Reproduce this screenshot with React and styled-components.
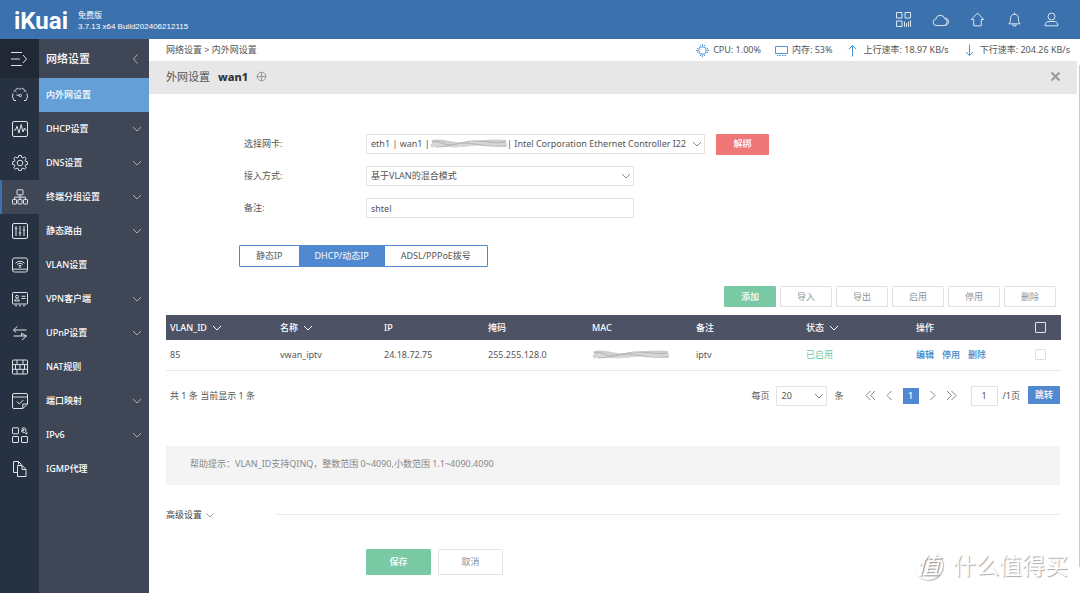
import { useState } from 'react'
import styled, { createGlobalStyle } from 'styled-components'


const menuItems = [
    { title: '内外网设置', active: true },
    { title: 'DHCP设置', expandable: true },
    { title: 'DNS设置', expandable: true },
    { title: '终端分组设置', expandable: true },
    { title: '静态路由', expandable: true },
    { title: 'VLAN设置' },
    { title: 'VPN客户端', expandable: true },
    { title: 'UPnP设置', expandable: true },
    { title: 'NAT规则' },
    { title: '端口映射', expandable: true },
    { title: 'IPv6', expandable: true },
    { title: 'IGMP代理' },
]

const columns = [
    { title: 'VLAN_ID', width: 110, sortable: true },
    { title: '名称', width: 104, sortable: true },
    { title: 'IP', width: 104 },
    { title: '掩码', width: 104 },
    { title: 'MAC', width: 104 },
    { title: '备注', width: 110 },
    { title: '状态', width: 110, sortable: true },
    { title: '操作', width: 108 },
]

const tabs = ['静态IP', 'DHCP/动态IP', 'ADSL/PPPoE拨号']
const bulkActions = ['导入', '导出', '启用', '停用', '删除']

// the hidden MAC address leaves a gap in the adapter name
const adapterName = `eth1 | wan1 |${'\u00a0'.repeat(33)}| Intel Corporation Ethernet Controller I22`

const railIcons = [
    { name: '概况', draw: <><path d="M4 13.500H2A7.300 7.300 0 0 1 1 6.500M1.800 4.700A7.400 7.400 0 0 1 6.500 1.200M9.500 1.200a7.400 7.400 0 0 1 4.700 3.500M15 6.500a7.400 7.400 0 0 1-1 7h-2" /><circle cx="8.300" cy="8.500" r="1.200" /><path d="M4.500 8l2.600.4M8 1v2M12.800 4l-1.100 1M3.300 4l1.100 1" /></> },
    { name: '监控', draw: <><rect x=".5" y=".5" width="15" height="15" rx="1.5" /><path d="M2 9h1.500L5 5.200l2 6.800 2.200-8.500L11 11l1.500-4 .9 2h1" /></> },
    { name: '系统', draw: <><circle cx="8" cy="8" r="2.8" /><path d="M6.7.5h2.6l.4 2 1.3.5 1.7-1.1 1.5 1.6-1.1 1.7.5 1.3 2 .4v2.4l-2 .4-.5 1.3 1.1 1.7-1.5 1.5-1.7-1.1-1.3.5-.4 2H6.700l-.4-2-1.300-.5-1.700 1.100-1.500-1.500L2.900 11l-.5-1.300-2-.4V6.900l2-.4.5-1.300-1.100-1.700 1.500-1.600L5 3l1.300-.5z" /></> },
    { name: '网络', active: true, draw: <><rect x="5" y=".8" width="6" height="5" rx=".5" /><path d="M8 5.800v4.700M2.500 10.500V8.200h11v2.300" /><rect x=".5" y="10.500" width="4" height="4.500" rx=".5" /><rect x="6" y="10.500" width="4" height="4.500" rx=".5" /><rect x="11.500" y="10.500" width="4" height="4.500" rx=".5" /></> },
    { name: '流控', draw: <><rect x=".5" y=".5" width="15" height="15" rx="1.5" /><path d="M4 3v10M8 3v10M12 3v10M2.800 5.500h2.400M6.800 10h2.400M10.800 7h2.400" /></> },
    { name: '无线', draw: <><rect x=".5" y="1" width="15" height="14" rx="2" /><path d="M.5 12.200h15M3.500 6.200a6.300 6.300 0 0 1 9 0M5 7.600a4.200 4.200 0 0 1 6 0M6.500 9a2 2 0 0 1 3 0" /><circle cx="8" cy="10" r=".5" /></> },
    { name: '认证', draw: <><rect x=".5" y="1.500" width="15" height="11.500" rx=".8" /><circle cx="5" cy="5.700" r="1.400" /><path d="M2.700 10c.2-3 4.500-3 4.700 0zM9.500 5.300h4M9.500 7.500h4M3 14.800h2M7 14.800h2M11 14.800h2" /></> },
    { name: '转发', draw: <path d="M14.500 5H1.500l4-3.800M1.500 5l2.700 2.500M1.500 11h13l-4.500 4M14.500 11L9.500 8.200v2.800" /> },
    { name: '防火墙', draw: <><rect x=".5" y="1" width="15" height="14" rx="1" /><path d="M.5 5.600h15M.5 10.300h15M5 1v4.600M11 1v4.600M3.500 5.600v4.700M8 5.600v4.700M12.500 5.600v4.700M5 10.300V15M11 10.300V15" /></> },
    { name: '行为', draw: <><path d="M10.800 15.500H2A1.500 1.500 0 0 1 .5 14V2A1.500 1.500 0 0 1 2 .5h12A1.500 1.500 0 0 1 15.500 2v9zM.5 4h15M15.500 11h-4.700v4.500" /><path d="M4.800 8.500l2.500 2.500L11.500 6.800" /></> },
    { name: '应用', draw: <><rect x=".5" y=".8" width="6" height="6" rx=".5" /><rect x=".5" y="9.500" width="6" height="6" rx=".5" /><rect x="9.500" y="9.500" width="6" height="6" rx=".5" /><path d="M9.800 1.500l2.200-.8 2 1.500-.5 2 1.800 1.600-1 1.200-2-1.600-2.200-.4-.5-1.800 1.800.6.8-1z" /></> },
    { name: '日志', draw: <><path d="M5 11.500H1.500V.5h5L9 3v1.500M6.500.5v3" /><path d="M5.500 4.500h4.800l3.700 4v7H5.500zM10 4.500v4h4" /></> },
]

export default function App() {
    const [tab, setTab] = useState(1)
    const [remark, setRemark] = useState('shtel')
    const [page, setPage] = useState('1')

    return (
        <>
            <GlobalStyle />
            <Page>
                <TopBar>
                    <Logo>iKuai</Logo>
                    <Version>
                        <span>免费版</span>
                        <span>3.7.13 x64 Build202406212115</span>
                    </Version>
                    <TopIcons>
                        <IconButton aria-label="二维码">
                            <Icon size={17} viewBox="0 0 17 17">
                                <rect x="1.500" y="1.500" width="5.500" height="5.500" />
                                <rect x="10" y="1.500" width="5.500" height="5.500" />
                                <rect x="1.500" y="10" width="5.500" height="5.500" />
                                <path d="M9.500 10.500v5.300M11.500 12v3.800M13.500 10.500v5.300M15.500 9.500v6.300" />
                            </Icon>
                        </IconButton>
                        <IconButton aria-label="云平台">
                            <Icon size={17} viewBox="0 0 17 17">
                                <path d="M4 14.500a3.300 3.300 0 0 1-.2-6.500 4.600 4.600 0 0 1 8.900-.5 3.600 3.600 0 0 1-.9 7z" />
                                <path d="M12.700 7.300c2-.5 3.800 1 3.800 3.200 0 2.300-1.500 4-3.700 4" />
                            </Icon>
                        </IconButton>
                        <IconButton aria-label="升级">
                            <Icon size={17} viewBox="0 0 17 17">
                                <path d="M8.500 2L2.300 8.500h2.400v6.300h7.600V8.500h2.400z" />
                            </Icon>
                        </IconButton>
                        <IconButton aria-label="消息">
                            <Icon size={17} viewBox="0 0 17 17">
                                <path d="M2.800 12.800c1.500-1.200 1.700-2.300 1.700-5C4.500 5 6 3.300 8.500 3.300S12.500 5 12.500 7.800c0 2.700.2 3.800 1.700 5zM8.500 3.300V1.500M7 13v1.800h3V13" />
                            </Icon>
                        </IconButton>
                        <IconButton aria-label="用户">
                            <Icon size={17} viewBox="0 0 17 17">
                                <circle cx="8.500" cy="5.500" r="3.500" />
                                <path d="M2 14.800c0-3 1.500-4.300 4-4.300h5c2.500 0 4 1.300 4 4.300z" />
                            </Icon>
                        </IconButton>
                    </TopIcons>
                </TopBar>
                <Body>
                    <Rail>
                        <RailToggle aria-label="展开菜单">
                            <Icon size={16} viewBox="0 0 16 16">
                                <path d="M0 1.500h11M0 8h9M0 14.500h11M12 4l3.500 4-3.500 4" />
                            </Icon>
                        </RailToggle>
                        {railIcons.map((item) => (
                            <RailItem key={item.name} aria-label={item.name} $active={item.active}>
                                <Icon size={16} viewBox="0 0 16 16">{item.draw}</Icon>
                            </RailItem>
                        ))}
                    </Rail>
                    <Menu>
                        <MenuTitle>
                            网络设置
                            <Icon size={10} viewBox="0 0 10 10"><path d="M6.500.5L2.500 5l4 4.500" /></Icon>
                        </MenuTitle>
                        {menuItems.map((item) => (
                            <MenuItem key={item.title} href="#" $active={item.active}>
                                {item.title}
                                {item.expandable && <Chevron />}
                            </MenuItem>
                        ))}
                    </Menu>
                    <Main>
                        <StatusBar>
                            <Crumbs>网络设置 &gt; 内外网设置</Crumbs>
                            <Stat>
                                <Icon size={13} viewBox="0 0 13 13">
                                    <rect x="3" y="3" width="7" height="7" rx="2" />
                                    <path d="M4.500 1v1M6.500 0v2M8.500 1v1M4.500 11v1M6.500 11v2M8.500 11v1M1 4.500h1M0 6.500h2M1 8.500h1M11 4.500h1M11 6.500h2M11 8.500h1" />
                                </Icon>
                                CPU: 1.00%
                            </Stat>
                            <Stat>
                                <Icon size={13} viewBox="0 0 13 13">
                                    <rect x=".5" y="2.500" width="12" height="7" />
                                    <path d="M2 11.500h9" strokeDasharray="1.500 1" />
                                </Icon>
                                内存: 53%
                            </Stat>
                            <Stat>
                                <Icon size={13} viewBox="0 0 13 13"><path d="M6.500 12.500v-11M3 5l3.500-3.500L10 5" /></Icon>
                                上行速率: 18.97 KB/s
                            </Stat>
                            <Stat>
                                <Icon size={13} viewBox="0 0 13 13"><path d="M6.500.5v11M3 8l3.500 3.500L10 8" /></Icon>
                                下行速率: 204.26 KB/s
                            </Stat>
                        </StatusBar>
                        <TitleBar>
                            <span>外网设置</span>
                            <WanName>wan1</WanName>
                            <IconButton aria-label="新增">
                                <Icon size={11} viewBox="0 0 11 11"><circle cx="5.500" cy="5.500" r="4.300" /><path d="M5.500 1v9M1 5.500h9" /></Icon>
                            </IconButton>
                            <CloseButton aria-label="关闭">
                                <Icon size={11} viewBox="0 0 11 11" weight={2}><path d="M1.500 1.500l8 8M9.500 1.500l-8 8" /></Icon>
                            </CloseButton>
                        </TitleBar>
                        <Content>
                            <Form>
                                <Row>
                                    <Label htmlFor="adapter">选择网卡:</Label>
                                    <SelectBox $width={339}>
                                        <Select id="adapter"><option>{adapterName}</option></Select>
                                        <AdapterMask><Scribble /></AdapterMask>
                                        <Chevron />
                                    </SelectBox>
                                    <UnbindButton>解绑</UnbindButton>
                                </Row>
                                <Row>
                                    <Label htmlFor="mode">接入方式:</Label>
                                    <SelectBox $width={268}>
                                        <Select id="mode"><option>基于VLAN的混合模式</option></Select>
                                        <Chevron />
                                    </SelectBox>
                                </Row>
                                <Row>
                                    <Label htmlFor="remark">备注:</Label>
                                    <Input id="remark" $width={268} value={remark} onChange={(e) => setRemark(e.target.value)} />
                                </Row>
                            </Form>
                            <Tabs>
                                {tabs.map((title, index) => (
                                    <Tab key={title} $active={index === tab} onClick={() => setTab(index)}>{title}</Tab>
                                ))}
                            </Tabs>
                            <Toolbar>
                                <Button $primary>添加</Button>
                                {bulkActions.map((title) => <Button key={title}>{title}</Button>)}
                            </Toolbar>
                            <Table>
                                <thead>
                                    <tr>
                                        {columns.map((column) => (
                                            <Th key={column.title} $width={column.width}>
                                                <HeadCell>
                                                    {column.title}
                                                    {column.sortable && <Chevron />}
                                                </HeadCell>
                                            </Th>
                                        ))}
                                        <Th $width={41} $center><Checkbox aria-label="全选" $dark /></Th>
                                    </tr>
                                </thead>
                                <tbody>
                                    <tr>
                                        <Td>85</Td>
                                        <Td>vwan_iptv</Td>
                                        <Td>24.18.72.75</Td>
                                        <Td>255.255.128.0</Td>
                                        <Td><Scribble /></Td>
                                        <Td>iptv</Td>
                                        <Td $enabled>已启用</Td>
                                        <Td>
                                            <Links>
                                                <a href="#">编辑</a>
                                                <a href="#">停用</a>
                                                <a href="#">删除</a>
                                            </Links>
                                        </Td>
                                        <Td $center><Checkbox aria-label="选择 vwan_iptv" /></Td>
                                    </tr>
                                </tbody>
                            </Table>
                            <Pager>
                                <Total>共 1 条 当前显示 1 条</Total>
                                <label htmlFor="size">每页</label>
                                <SelectBox $width={51}>
                                    <Select id="size"><option>20</option></Select>
                                    <Chevron />
                                </SelectBox>
                                <span>条</span>
                                <PageLinks>
                                    <IconButton aria-label="首页"><Icon size={11} viewBox="0 0 11 11"><path d="M5.500 1L1 5.500 5.500 10M10 1L5.500 5.500 10 10" /></Icon></IconButton>
                                    <IconButton aria-label="上一页"><Icon size={11} viewBox="0 0 11 11"><path d="M7.500 1L3 5.500 7.500 10" /></Icon></IconButton>
                                    <CurrentPage>1</CurrentPage>
                                    <IconButton aria-label="下一页"><Icon size={11} viewBox="0 0 11 11"><path d="M3.500 1L8 5.500 3.500 10" /></Icon></IconButton>
                                    <IconButton aria-label="末页"><Icon size={11} viewBox="0 0 11 11"><path d="M1 1l4.500 4.500L1 10M5.500 1L10 5.500 5.500 10" /></Icon></IconButton>
                                </PageLinks>
                                <PageInput aria-label="页码" value={page} onChange={(e) => setPage(e.target.value)} />
                                <PageCount>/1页</PageCount>
                                <JumpButton>跳转</JumpButton>
                            </Pager>
                            <Help>帮助提示：VLAN_ID支持QINQ，整数范围 0~4090,小数范围 1.1~4090.4090</Help>
                            <Advanced>
                                <AdvancedButton>高级设置 <Icon size={8} viewBox="0 0 8 8"><path d="M.5 2.500L4 6l3.500-3.500" /></Icon></AdvancedButton>
                                <Divider />
                            </Advanced>
                            <Actions>
                                <Button $primary $large>保存</Button>
                                <Button $large>取消</Button>
                            </Actions>
                        </Content>
                        <ScrollThumb />
                    </Main>
                </Body>
                <Watermark>
                    <Badge>值</Badge>
                    什么值得买
                </Watermark>
            </Page>
        </>
    )
}

function Icon({ size, viewBox, weight = 1, children }) {
    return (
        <svg width={size} height={size} viewBox={viewBox} fill="none" stroke="currentColor" strokeWidth={weight} strokeLinejoin="round" aria-hidden="true">
            {children}
        </svg>
    )
}

function Chevron() {
    return <Icon size={10} viewBox="0 0 10 10"><path d="M1 3l4 4 4-4" /></Icon>
}

function Scribble() {
    return (
        <svg width="80" height="12" viewBox="0 0 80 12" fill="none" aria-hidden="true">
            <path d="M2 4c12-3 22 5 38 2s24-3 36-2" stroke="#cdcdcd" strokeWidth="4" />
            <path d="M1 8c10-4 16 1 30-1s28-3 46 0" stroke="#d6d6d6" strokeWidth="4" />
            <path d="M2 4c6-2 9 1 15 3 8 1 20-5 30-4 10 0 18 3 29 1M6 9c12 0 18-4 30-4 12 1 20 4 40 3" stroke="#b3b3b3" />
        </svg>
    )
}

const GlobalStyle = createGlobalStyle`
    * {
        box-sizing: border-box;
    }
    body {
        margin: 0;
        background: #fff;
    }
    body, button, input, select {
        color: #555;
        font-family: "Noto Sans", "Noto Sans CJK SC", sans-serif;
        font-size: 9px;
        line-height: 12px;
    }
    button {
        padding: 0;
        border: 0;
        background: none;
        cursor: pointer;
    }
    a {
        color: inherit;
        text-decoration: none;
    }
    svg {
        display: block;
        flex-shrink: 0;
    }
`
const Page = styled.div`
    position: relative;
    display: flex;
    flex-direction: column;
    min-height: 100vh;
`
const TopBar = styled.header`
    display: flex;
    align-items: center;
    height: 39px;
    padding: 0 20px 0 14px;
    background: #3b72ad;
    color: #fff;
`
const Logo = styled.div`
    padding-top: 2px;
    font-family: Roboto, sans-serif;
    font-size: 24px;
    font-weight: 700;
    line-height: 28px;
`
const Version = styled.div`
    display: flex;
    flex-direction: column;
    margin-left: 10px;
    padding-top: 2px;
    font-family: "Liberation Sans", "Noto Sans CJK SC", sans-serif;
    font-size: 8px;
    line-height: 11px;
`
const TopIcons = styled.nav`
    display: flex;
    gap: 20px;
    margin-left: auto;
    color: #dbe7f3;
`
const IconButton = styled.button`
    color: inherit;
`
const Body = styled.div`
    display: flex;
    flex: 1;
`
const Rail = styled.nav`
    width: 39px;
    flex-shrink: 0;
    background: #263141;
    color: #dfe3e8;
`
const RailItem = styled.button`
    display: flex;
    align-items: center;
    width: 100%;
    height: 34px;
    padding-left: 10px;
    border-left: 2px solid ${({ $active }) => ($active ? '#3b72ad' : 'transparent')};
    background: ${({ $active }) => ($active ? '#3f4756' : 'transparent')};
    color: inherit;
`
const RailToggle = styled(RailItem)`
    height: 39px;
    padding-left: 9px;
    border-left-color: #1f2834;
    background: #1f2834;
`
const Menu = styled.nav`
    width: 110px;
    flex-shrink: 0;
    background: #3f4756;
    color: #fff;
    font-weight: 500;
`
const MenuTitle = styled.div`
    display: flex;
    align-items: center;
    justify-content: space-between;
    height: 39px;
    padding: 0 8px 0 7px;
    font-size: 11px;
    svg {
        color: #a9b0ba;
    }
`
const MenuItem = styled.a`
    display: flex;
    align-items: center;
    justify-content: space-between;
    height: 34px;
    padding: 0 7px;
    background: ${({ $active }) => ($active ? '#649fd7' : 'transparent')};
    svg {
        color: #a9b0ba;
    }
`
const Main = styled.main`
    position: relative;
    flex: 1;
    min-width: 0;
`
const StatusBar = styled.div`
    display: flex;
    align-items: center;
    gap: 14px;
    height: 22px;
    padding: 0 10px 0 17px;
`
const Crumbs = styled.div`
    margin-right: auto;
`
const Stat = styled.div`
    display: flex;
    align-items: center;
    gap: 4px;
    svg {
        color: #4a94d8;
    }
`
const TitleBar = styled.div`
    display: flex;
    align-items: center;
    gap: 8px;
    height: 33px;
    margin-right: 3px;
    padding: 0 16px 2px 17px;
    background: #e7e7e7;
    font-size: 11px;
    color: #555;
    svg {
        color: #999;
    }
`
const WanName = styled.b`
    color: #333;
    font-size: 11px;
    font-weight: 800;
`
const CloseButton = styled(IconButton)`
    margin-left: auto;
`
const Content = styled.div`
    padding: 40px 20px 18px 17px;
`
const Form = styled.div`
    display: flex;
    flex-direction: column;
    gap: 12px;
    padding-left: 78px;
`
const Row = styled.div`
    display: flex;
    align-items: center;
    height: 20px;
`
const Label = styled.label`
    width: 122px;
`
const SelectBox = styled.div`
    position: relative;
    width: ${({ $width }) => $width}px;
    > svg {
        position: absolute;
        right: 3px;
        top: 5px;
        color: #888;
        pointer-events: none;
    }
`
const Input = styled.input`
    width: ${({ $width }) => $width}px;
    height: 20px;
    padding: 0 4px;
    border: 1px solid #e2e2e2;
    border-radius: 1px;
    background: #fff;
`
const Select = styled(Input).attrs({ as: 'select' })`
    display: block;
    width: 100%;
    appearance: none;
`
const AdapterMask = styled.div`
    position: absolute;
    left: 64px;
    top: 4px;
    pointer-events: none;
`
const UnbindButton = styled.button`
    width: 53px;
    height: 21px;
    margin-left: 11px;
    border-radius: 1px;
    background: #ef7777;
    color: #fff;
    font-weight: 500;
`
const Tabs = styled.div`
    display: flex;
    width: max-content;
    height: 22px;
    margin: 27px 0 0 73px;
    border: 1px solid #5089cf;
    border-radius: 1px;
`
const Tab = styled.button`
    padding: 0 16px;
    background: ${({ $active }) => ($active ? '#5089cf' : '#fff')};
    color: ${({ $active }) => ($active ? '#fff' : '#555')};
`
const Toolbar = styled.div`
    display: flex;
    justify-content: flex-end;
    gap: 4px;
    margin: 19px 4px 8px 0;
`
const Button = styled.button`
    width: ${({ $large }) => ($large ? 65 : 52)}px;
    height: ${({ $large }) => ($large ? 26 : 21)}px;
    border: 1px solid ${({ $primary }) => ($primary ? '#79c9a5' : '#e2e2e2')};
    border-radius: 1px;
    background: ${({ $primary }) => ($primary ? '#79c9a5' : '#fff')};
    color: ${({ $primary }) => ($primary ? '#fff' : '#8b949c')};
    font-weight: ${({ $primary }) => ($primary ? 500 : 400)};
`
const Table = styled.table`
    width: 100%;
    table-layout: fixed;
    border-collapse: collapse;
`
const Th = styled.th`
    width: ${({ $width }) => $width}px;
    height: 25px;
    padding: 0 ${({ $center }) => ($center ? 0 : 4)}px;
    background: #4e5265;
    color: #fff;
    font-weight: 500;
    text-align: left;
`
const HeadCell = styled.div`
    display: flex;
    align-items: center;
    gap: 5px;
`
const Td = styled.td`
    height: 30px;
    padding: 0 ${({ $center }) => ($center ? 0 : 4)}px;
    border-bottom: 1px solid #e8e8e8;
    color: ${({ $enabled }) => ($enabled ? '#6fc79c' : '#555')};
`
const Checkbox = styled.input.attrs({ type: 'checkbox' })`
    display: block;
    width: 11px;
    height: 11px;
    margin: 0 auto;
    appearance: none;
    border: 1px solid ${({ $dark }) => ($dark ? '#e4e4e8' : '#dedede')};
    border-radius: 1px;
    &:checked {
        background: #5089cf;
    }
`
const Links = styled.div`
    display: flex;
    gap: 8px;
    color: #3d85c9;
    font-weight: 500;
`
const Pager = styled.div`
    display: flex;
    align-items: center;
    gap: 7px;
    height: 20px;
    margin-top: 15px;
`
const Total = styled.div`
    margin: 0 auto 0 4px;
`
const PageLinks = styled.div`
    display: flex;
    align-items: center;
    gap: 8px;
    margin: 0 7px 0 14px;
    color: #888;
`
const CurrentPage = styled.button`
    width: 16px;
    height: 16px;
    background: #5089cf;
    color: #fff;
    font-weight: 500;
`
const PageInput = styled(Input)`
    width: 27px;
    text-align: center;
`
const PageCount = styled.span`
    margin: 0 1px 0 -2px;
`
const JumpButton = styled.button`
    width: 32px;
    height: 18px;
    align-self: flex-start;
    border-radius: 1px;
    background: #5089cf;
    color: #fff;
    font-weight: 500;
`
const Help = styled.p`
    margin: 40px 0 0;
    padding: 12px 24px 15px;
    background: #f4f4f4;
    color: #888;
`
const Advanced = styled.div`
    display: flex;
    align-items: center;
    margin-top: 24px;
`
const AdvancedButton = styled.button`
    display: flex;
    align-items: center;
    gap: 4px;
    width: 110px;
    color: #444;
    svg {
        color: #999;
    }
`
const Divider = styled.hr`
    flex: 1;
    margin: 0;
    border: 0;
    border-top: 1px solid #ececec;
`
const Actions = styled.div`
    display: flex;
    gap: 7px;
    margin: 28px 0 0 200px;
`
const ScrollThumb = styled.div`
    position: absolute;
    top: 26px;
    right: 0;
    bottom: 26px;
    width: 1px;
    background: #c9c9c9;
`
const Watermark = styled.div`
    position: absolute;
    right: 12px;
    bottom: 13px;
    display: flex;
    align-items: center;
    gap: 10px;
    color: #fff;
    font-size: 23px;
    line-height: 30px;
    text-shadow: 1px 1px 1px #aaa;
    pointer-events: none;
`
const Badge = styled.span`
    width: 30px;
    height: 30px;
    border-radius: 50%;
    box-shadow: 1px 1px 1px #bbb;
    font-style: italic;
    text-align: center;
    text-shadow: 1px 1px 1px #888;
`
